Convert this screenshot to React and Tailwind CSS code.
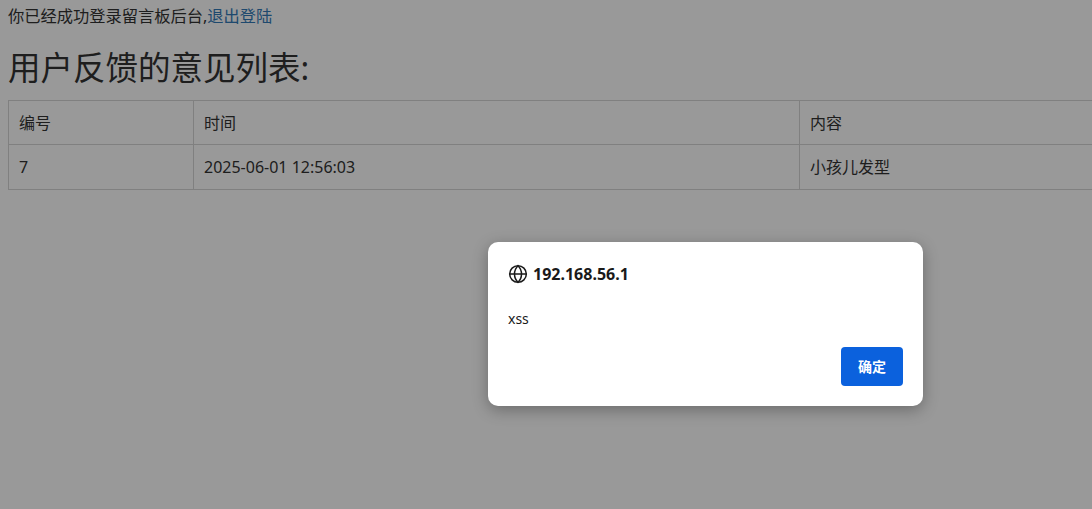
const FONT = "font-['Noto_Sans','Noto_Sans_CJK_SC',sans-serif]";

function Globe() {
  return (
    <svg width="20" height="20" viewBox="0 0 24 24" fill="none" stroke="#1a1a1a" strokeWidth="1.8">
      <circle cx="12" cy="12" r="10" />
      <path d="M2 12h20" />
      <path d="M12 2c2.8 2.7 4.2 6 4.2 10s-1.4 7.3-4.2 10c-2.8-2.7-4.2-6-4.2-10S9.2 4.7 12 2z" />
    </svg>
  );
}

export default function App() {
  const rows = [{ id: "7", time: "2025-06-01 12:56:03", content: "小孩儿发型" }];

  return (
    <div className={`relative h-[509px] w-[1092px] overflow-hidden bg-white text-[#333] ${FONT}`}>
      <div className="pl-2">
        <p className="pt-[5px] text-[16.25px] leading-[22px]">
          你已经成功登录留言板后台,<a href="#" className="text-[#337ab7]">退出登陆</a>
        </p>
        <h2 className="mt-[19px] text-[32.5px] leading-[44px] font-normal">用户反馈的意见列表:</h2>
        <table className="mt-[10px] w-[1120px] border-collapse text-[16px]">
          <thead>
            <tr className="h-[44px]">
              <th className="w-[185px] border border-[#d6d6d6] px-[10px] text-left font-normal">编号</th>
              <th className="w-[606px] border border-[#d6d6d6] px-[10px] text-left font-normal">时间</th>
              <th className="border border-[#d6d6d6] px-[10px] text-left font-normal">内容</th>
            </tr>
          </thead>
          <tbody>
            {rows.map((r) => (
              <tr key={r.id} className="h-[45px]">
                <td className="border border-[#d6d6d6] px-[10px]">{r.id}</td>
                <td className="border border-[#d6d6d6] px-[10px]">{r.time}</td>
                <td className="border border-[#d6d6d6] px-[10px]">{r.content}</td>
              </tr>
            ))}
          </tbody>
        </table>
      </div>

      {/* alert overlay */}
      <div className="absolute inset-0 bg-black/40" />
      <div className="absolute left-[488px] top-[242px] flex h-[164px] w-[435px] flex-col rounded-[10px] bg-white px-5 pt-[20px] shadow-[0_4px_16px_rgba(0,0,0,0.3)]">
        <div className="flex items-center gap-[5px]">
          <Globe />
          <span className="text-[16px] font-bold text-[#1a1a1a]">192.168.56.1</span>
        </div>
        <div className="mt-[22px] text-[14px] text-[#1a1a1a]">xss</div>
        <div className="mt-auto flex justify-end pb-[20px]">
          <button className="h-[39px] w-[62px] rounded-[4px] bg-[#0b61dd] text-[14px] font-bold text-white">确定</button>
        </div>
      </div>
    </div>
  );
}
